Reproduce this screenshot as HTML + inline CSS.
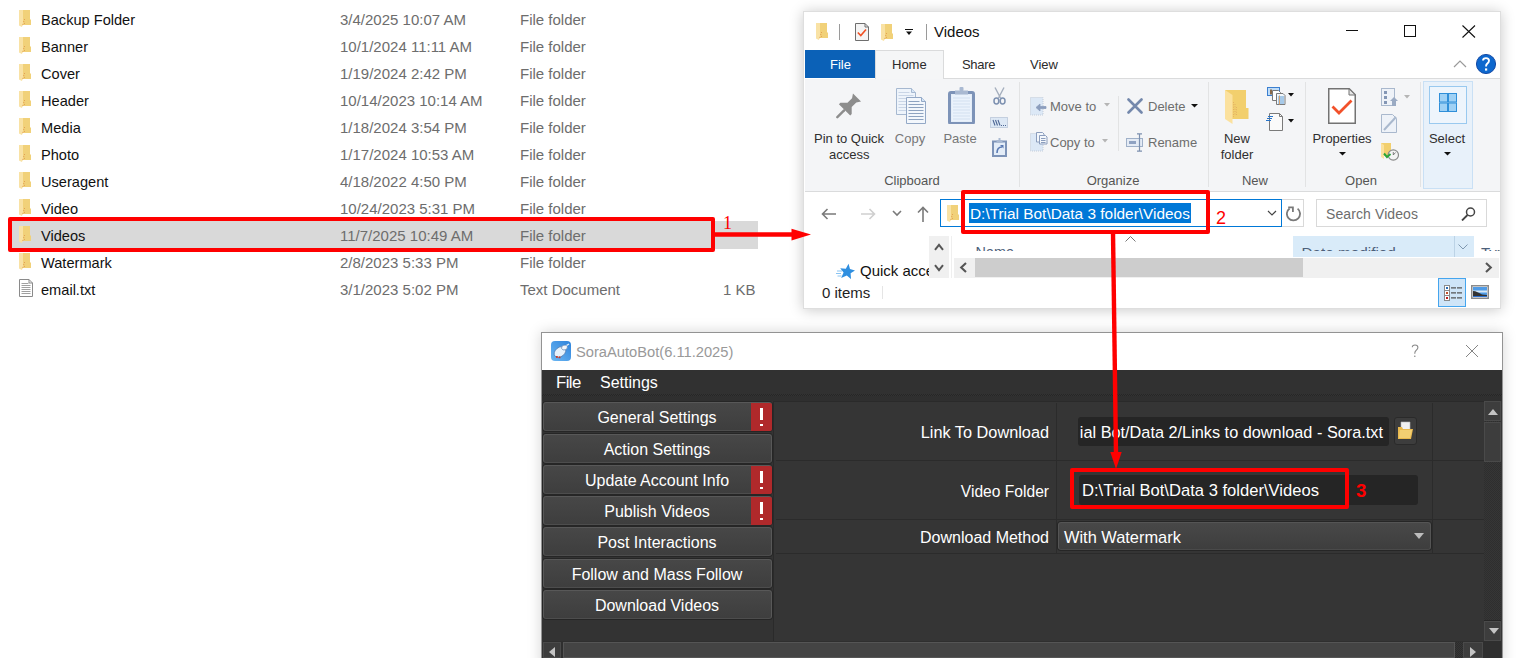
<!DOCTYPE html>
<html><head><meta charset="utf-8">
<style>
*{margin:0;padding:0;box-sizing:border-box}
html,body{width:1516px;height:658px;overflow:hidden;background:#fff;font-family:"Liberation Sans",sans-serif;position:relative}
.a{position:absolute;white-space:pre}
.b{position:absolute}
</style></head><body>
<div class="b" style="left:9px;top:221px;width:749px;height:28px;background:#d9d9d9"></div>
<svg class="b" style="left:19px;top:10px" width="12" height="17" viewBox="0 0 12 17"><path d="M3.5 0h7.5v9.5h1V15H3.5z" fill="#f1d179"/><path d="M0 0h4v15l-1.2 2L0 15.6z" fill="#f9e2a5"/><circle cx="5.5" cy="9.5" r=".5" fill="#e0904a"/><circle cx="4.8" cy="11.5" r=".5" fill="#e0904a"/><circle cx="5.5" cy="13.3" r=".5" fill="#e0904a"/><circle cx="3.8" cy="14.3" r=".5" fill="#e0904a"/></svg>
<div class="a" style="left:41px;top:12.64px;font-size:14.6px;line-height:14.6px;color:#111;">Backup Folder</div>
<div class="a" style="left:340px;top:12.30px;font-size:15px;line-height:15px;color:#6d6d6d;">3/4/2025 10:07 AM</div>
<div class="a" style="left:520px;top:12.30px;font-size:15px;line-height:15px;color:#6d6d6d;">File folder</div>
<svg class="b" style="left:19px;top:37px" width="12" height="17" viewBox="0 0 12 17"><path d="M3.5 0h7.5v9.5h1V15H3.5z" fill="#f1d179"/><path d="M0 0h4v15l-1.2 2L0 15.6z" fill="#f9e2a5"/><circle cx="5.5" cy="9.5" r=".5" fill="#e0904a"/><circle cx="4.8" cy="11.5" r=".5" fill="#e0904a"/><circle cx="5.5" cy="13.3" r=".5" fill="#e0904a"/><circle cx="3.8" cy="14.3" r=".5" fill="#e0904a"/></svg>
<div class="a" style="left:41px;top:39.64px;font-size:14.6px;line-height:14.6px;color:#111;">Banner</div>
<div class="a" style="left:340px;top:39.30px;font-size:15px;line-height:15px;color:#6d6d6d;">10/1/2024 11:11 AM</div>
<div class="a" style="left:520px;top:39.30px;font-size:15px;line-height:15px;color:#6d6d6d;">File folder</div>
<svg class="b" style="left:19px;top:64px" width="12" height="17" viewBox="0 0 12 17"><path d="M3.5 0h7.5v9.5h1V15H3.5z" fill="#f1d179"/><path d="M0 0h4v15l-1.2 2L0 15.6z" fill="#f9e2a5"/><circle cx="5.5" cy="9.5" r=".5" fill="#e0904a"/><circle cx="4.8" cy="11.5" r=".5" fill="#e0904a"/><circle cx="5.5" cy="13.3" r=".5" fill="#e0904a"/><circle cx="3.8" cy="14.3" r=".5" fill="#e0904a"/></svg>
<div class="a" style="left:41px;top:66.64px;font-size:14.6px;line-height:14.6px;color:#111;">Cover</div>
<div class="a" style="left:340px;top:66.30px;font-size:15px;line-height:15px;color:#6d6d6d;">1/19/2024 2:42 PM</div>
<div class="a" style="left:520px;top:66.30px;font-size:15px;line-height:15px;color:#6d6d6d;">File folder</div>
<svg class="b" style="left:19px;top:91px" width="12" height="17" viewBox="0 0 12 17"><path d="M3.5 0h7.5v9.5h1V15H3.5z" fill="#f1d179"/><path d="M0 0h4v15l-1.2 2L0 15.6z" fill="#f9e2a5"/><circle cx="5.5" cy="9.5" r=".5" fill="#e0904a"/><circle cx="4.8" cy="11.5" r=".5" fill="#e0904a"/><circle cx="5.5" cy="13.3" r=".5" fill="#e0904a"/><circle cx="3.8" cy="14.3" r=".5" fill="#e0904a"/></svg>
<div class="a" style="left:41px;top:93.64px;font-size:14.6px;line-height:14.6px;color:#111;">Header</div>
<div class="a" style="left:340px;top:93.30px;font-size:15px;line-height:15px;color:#6d6d6d;">10/14/2023 10:14 AM</div>
<div class="a" style="left:520px;top:93.30px;font-size:15px;line-height:15px;color:#6d6d6d;">File folder</div>
<svg class="b" style="left:19px;top:118px" width="12" height="17" viewBox="0 0 12 17"><path d="M3.5 0h7.5v9.5h1V15H3.5z" fill="#f1d179"/><path d="M0 0h4v15l-1.2 2L0 15.6z" fill="#f9e2a5"/><circle cx="5.5" cy="9.5" r=".5" fill="#e0904a"/><circle cx="4.8" cy="11.5" r=".5" fill="#e0904a"/><circle cx="5.5" cy="13.3" r=".5" fill="#e0904a"/><circle cx="3.8" cy="14.3" r=".5" fill="#e0904a"/></svg>
<div class="a" style="left:41px;top:120.64px;font-size:14.6px;line-height:14.6px;color:#111;">Media</div>
<div class="a" style="left:340px;top:120.30px;font-size:15px;line-height:15px;color:#6d6d6d;">1/18/2024 3:54 PM</div>
<div class="a" style="left:520px;top:120.30px;font-size:15px;line-height:15px;color:#6d6d6d;">File folder</div>
<svg class="b" style="left:19px;top:145px" width="12" height="17" viewBox="0 0 12 17"><path d="M3.5 0h7.5v9.5h1V15H3.5z" fill="#f1d179"/><path d="M0 0h4v15l-1.2 2L0 15.6z" fill="#f9e2a5"/><circle cx="5.5" cy="9.5" r=".5" fill="#e0904a"/><circle cx="4.8" cy="11.5" r=".5" fill="#e0904a"/><circle cx="5.5" cy="13.3" r=".5" fill="#e0904a"/><circle cx="3.8" cy="14.3" r=".5" fill="#e0904a"/></svg>
<div class="a" style="left:41px;top:147.64px;font-size:14.6px;line-height:14.6px;color:#111;">Photo</div>
<div class="a" style="left:340px;top:147.30px;font-size:15px;line-height:15px;color:#6d6d6d;">1/17/2024 10:53 AM</div>
<div class="a" style="left:520px;top:147.30px;font-size:15px;line-height:15px;color:#6d6d6d;">File folder</div>
<svg class="b" style="left:19px;top:172px" width="12" height="17" viewBox="0 0 12 17"><path d="M3.5 0h7.5v9.5h1V15H3.5z" fill="#f1d179"/><path d="M0 0h4v15l-1.2 2L0 15.6z" fill="#f9e2a5"/><circle cx="5.5" cy="9.5" r=".5" fill="#e0904a"/><circle cx="4.8" cy="11.5" r=".5" fill="#e0904a"/><circle cx="5.5" cy="13.3" r=".5" fill="#e0904a"/><circle cx="3.8" cy="14.3" r=".5" fill="#e0904a"/></svg>
<div class="a" style="left:41px;top:174.64px;font-size:14.6px;line-height:14.6px;color:#111;">Useragent</div>
<div class="a" style="left:340px;top:174.30px;font-size:15px;line-height:15px;color:#6d6d6d;">4/18/2022 4:50 PM</div>
<div class="a" style="left:520px;top:174.30px;font-size:15px;line-height:15px;color:#6d6d6d;">File folder</div>
<svg class="b" style="left:19px;top:199px" width="12" height="17" viewBox="0 0 12 17"><path d="M3.5 0h7.5v9.5h1V15H3.5z" fill="#f1d179"/><path d="M0 0h4v15l-1.2 2L0 15.6z" fill="#f9e2a5"/><circle cx="5.5" cy="9.5" r=".5" fill="#e0904a"/><circle cx="4.8" cy="11.5" r=".5" fill="#e0904a"/><circle cx="5.5" cy="13.3" r=".5" fill="#e0904a"/><circle cx="3.8" cy="14.3" r=".5" fill="#e0904a"/></svg>
<div class="a" style="left:41px;top:201.64px;font-size:14.6px;line-height:14.6px;color:#111;">Video</div>
<div class="a" style="left:340px;top:201.30px;font-size:15px;line-height:15px;color:#6d6d6d;">10/24/2023 5:31 PM</div>
<div class="a" style="left:520px;top:201.30px;font-size:15px;line-height:15px;color:#6d6d6d;">File folder</div>
<svg class="b" style="left:19px;top:226px" width="12" height="17" viewBox="0 0 12 17"><path d="M3.5 0h7.5v9.5h1V15H3.5z" fill="#f1d179"/><path d="M0 0h4v15l-1.2 2L0 15.6z" fill="#f9e2a5"/><circle cx="5.5" cy="9.5" r=".5" fill="#e0904a"/><circle cx="4.8" cy="11.5" r=".5" fill="#e0904a"/><circle cx="5.5" cy="13.3" r=".5" fill="#e0904a"/><circle cx="3.8" cy="14.3" r=".5" fill="#e0904a"/></svg>
<div class="a" style="left:41px;top:228.64px;font-size:14.6px;line-height:14.6px;color:#111;">Videos</div>
<div class="a" style="left:340px;top:228.30px;font-size:15px;line-height:15px;color:#6d6d6d;">11/7/2025 10:49 AM</div>
<div class="a" style="left:520px;top:228.30px;font-size:15px;line-height:15px;color:#6d6d6d;">File folder</div>
<svg class="b" style="left:19px;top:253px" width="12" height="17" viewBox="0 0 12 17"><path d="M3.5 0h7.5v9.5h1V15H3.5z" fill="#f1d179"/><path d="M0 0h4v15l-1.2 2L0 15.6z" fill="#f9e2a5"/><circle cx="5.5" cy="9.5" r=".5" fill="#e0904a"/><circle cx="4.8" cy="11.5" r=".5" fill="#e0904a"/><circle cx="5.5" cy="13.3" r=".5" fill="#e0904a"/><circle cx="3.8" cy="14.3" r=".5" fill="#e0904a"/></svg>
<div class="a" style="left:41px;top:255.64px;font-size:14.6px;line-height:14.6px;color:#111;">Watermark</div>
<div class="a" style="left:340px;top:255.30px;font-size:15px;line-height:15px;color:#6d6d6d;">2/8/2023 5:33 PM</div>
<div class="a" style="left:520px;top:255.30px;font-size:15px;line-height:15px;color:#6d6d6d;">File folder</div>
<svg class="b" style="left:19px;top:279px" width="14" height="18" viewBox="0 0 14 18"><path d="M.5 .5h9.5l3.5 3.5v13.5H.5z" fill="#fff" stroke="#8a8a8a"/><path d="M10 .5v3.5h3.5" fill="none" stroke="#8a8a8a"/><path d="M2.5 4.5h7M2.5 6.5h9M2.5 8.5h9M2.5 10.5h9M2.5 12.5h9M2.5 14.5h9" stroke="#a0a0a0"/></svg>
<div class="a" style="left:41px;top:282.64px;font-size:14.6px;line-height:14.6px;color:#111;">email.txt</div>
<div class="a" style="left:340px;top:282.30px;font-size:15px;line-height:15px;color:#6d6d6d;">3/1/2023 5:02 PM</div>
<div class="a" style="left:520px;top:282.30px;font-size:15px;line-height:15px;color:#6d6d6d;">Text Document</div>
<div class="a" style="left:723px;top:282.30px;font-size:15px;line-height:15px;color:#6d6d6d;">1 KB</div>
<div class="b" style="left:803px;top:11px;width:698px;height:298px;background:#fff;border:1px solid #dedede;box-shadow:0 1px 13px rgba(0,0,0,.22)"></div>
<svg class="b" style="left:816px;top:23px" width="12" height="17" viewBox="0 0 12 17"><path d="M3.5 0h7.5v9.5h1V15H3.5z" fill="#f1d179"/><path d="M0 0h4v15l-1.2 2L0 15.6z" fill="#f9e2a5"/><circle cx="5.5" cy="9.5" r=".5" fill="#e0904a"/><circle cx="4.8" cy="11.5" r=".5" fill="#e0904a"/><circle cx="5.5" cy="13.3" r=".5" fill="#e0904a"/><circle cx="3.8" cy="14.3" r=".5" fill="#e0904a"/></svg>
<div class="b" style="left:839px;top:24px;width:1px;height:16px;background:#9a9a9a"></div>
<svg class="b" style="left:855px;top:23px" width="14" height="18" viewBox="0 0 14 18"><path d="M.5 .5h9.5l3.5 3.5v13.5H.5z" fill="#f4f4f4" stroke="#6e6e6e"/><path d="M10 .5v3.5h3.5" fill="none" stroke="#6e6e6e"/><path d="M2.8 9.5l3 3 5.2-6" fill="none" stroke="#f05023" stroke-width="1.6"/></svg>
<svg class="b" style="left:881px;top:24px" width="12" height="17" viewBox="0 0 12 17"><path d="M3.5 0h7.5v9.5h1V15H3.5z" fill="#f1d179"/><path d="M0 0h4v15l-1.2 2L0 15.6z" fill="#f9e2a5"/><circle cx="5.5" cy="9.5" r=".5" fill="#e0904a"/><circle cx="4.8" cy="11.5" r=".5" fill="#e0904a"/><circle cx="5.5" cy="13.3" r=".5" fill="#e0904a"/><circle cx="3.8" cy="14.3" r=".5" fill="#e0904a"/></svg>
<svg class="b" style="left:905px;top:29px" width="9" height="8" viewBox="0 0 9 8"><path d="M0 .5h8" stroke="#111"/><path d="M1 2.5h6l-3 3.5z" fill="#111"/></svg>
<div class="b" style="left:926px;top:24px;width:1px;height:16px;background:#9a9a9a"></div>
<div class="a" style="left:934px;top:24.30px;font-size:15px;line-height:15px;color:#111;">Videos</div>
<div class="b" style="left:1346px;top:30px;width:12px;height:1px;background:#111"></div>
<div class="b" style="left:1404px;top:25px;width:12px;height:12px;border:1px solid #111"></div>
<svg class="b" style="left:1462px;top:25px" width="14" height="13" viewBox="0 0 14 13"><path d="M.5 .5l12.5 12M13 .5L.5 12.5" stroke="#111" stroke-width="1.1"/></svg>
<div class="b" style="left:805px;top:50px;width:70px;height:28px;background:#0b61b7"></div>
<div class="a" style="left:830px;top:58.00px;font-size:13px;line-height:13px;color:#fff;">File</div>
<div class="b" style="left:875px;top:50px;width:69px;height:30px;background:#f5f6f7;border:1px solid #dadbdc;border-bottom:none"></div>
<div class="b" style="left:944px;top:78px;width:556px;height:1px;background:#dadbdc"></div>
<div class="a" style="left:892px;top:58.00px;font-size:13px;line-height:13px;color:#2b2b2b;">Home</div>
<div class="a" style="left:962px;top:58.00px;font-size:13px;line-height:13px;color:#2b2b2b;letter-spacing:-.3px">Share</div>
<div class="a" style="left:1030px;top:58.00px;font-size:13px;line-height:13px;color:#2b2b2b;">View</div>
<svg class="b" style="left:1453px;top:60px" width="14" height="8" viewBox="0 0 14 8"><path d="M1 7l6-6 6 6" fill="none" stroke="#9a9a9a" stroke-width="1.2"/></svg>
<svg class="b" style="left:1476px;top:54px" width="20" height="20" viewBox="0 0 20 20"><circle cx="10" cy="10" r="9.6" fill="#0e68ce" stroke="#0a3f9e" stroke-width=".9"/><path d="M7 6.6C7 5 8.3 4.1 10 4.1s3 1 3 2.6c0 1.5-1 2.2-1.9 3-.8.7-1 1.3-1 2.4v.5" fill="none" stroke="#fff" stroke-width="1.9"/><rect x="9" y="14.4" width="2.2" height="2.2" fill="#fff"/></svg>
<div class="b" style="left:805px;top:79px;width:695px;height:112px;background:#f4f5f7"></div>
<div class="b" style="left:805px;top:191px;width:695px;height:1px;background:#dadbdc"></div>
<div class="b" style="left:1019px;top:82px;width:1px;height:105px;background:#e2e3e4"></div>
<div class="b" style="left:1208px;top:82px;width:1px;height:105px;background:#e2e3e4"></div>
<div class="b" style="left:1305px;top:82px;width:1px;height:105px;background:#e2e3e4"></div>
<div class="b" style="left:1420px;top:82px;width:1px;height:105px;background:#e2e3e4"></div>
<div class="b" style="left:1118px;top:96px;width:1px;height:55px;background:#e2e3e4"></div>
<svg class="b" style="left:836px;top:93px" width="26" height="26" viewBox="0 0 26 26"><g transform="translate(21 4.5) rotate(45)"><path d="M-5.7 0H5.7L3 4V10.5L8 15.5V17.6H-8V15.5L-3 10.5V4Z" fill="#8d8d8d"/><rect x="-1.2" y="17" width="2.4" height="12" rx="1.2" fill="#8d8d8d"/></g></svg>
<div class="a" style="left:814px;top:132.00px;font-size:13px;line-height:13px;color:#2f2f2f;">Pin to Quick</div>
<div class="a" style="left:829px;top:148.00px;font-size:13px;line-height:13px;color:#2f2f2f;">access</div>
<svg class="b" style="left:896px;top:88px" width="31" height="37" viewBox="0 0 31 37"><path d="M.5 .5h15l4 4v22H.5z" fill="#eef4fb" stroke="#a6b8d0"/><path d="M15.5 .5v4h4" fill="#d6e6f7" stroke="#a6b8d0"/><path d="M2.5 4.5h11M2.5 7.5h15M2.5 10.5h15M2.5 13.5h15M2.5 16.5h15M2.5 19.5h15M2.5 22.5h15" stroke="#c9d5e6"/><path d="M10.5 9.5h15l4 4v22h-19z" fill="#f3f7fc" stroke="#93a8c6"/><path d="M25.5 9.5v4h4" fill="#d6e6f7" stroke="#93a8c6"/><path d="M12.5 13.5h11M12.5 16.5h15M12.5 19.5h15M12.5 22.5h15M12.5 25.5h15M12.5 28.5h15M12.5 31.5h15" stroke="#8ea3c0" stroke-width="1.1"/></svg>
<div class="a" style="left:710px;width:400px;text-align:center;top:132.00px;font-size:13px;line-height:13px;color:#777;">Copy</div>
<svg class="b" style="left:948px;top:87px" width="27" height="37" viewBox="0 0 27 37"><rect x="1.5" y="5.5" width="24" height="31" rx="1.5" fill="#e4edf8" stroke="#7d93b8" stroke-width="3"/><rect x="4" y="8" width="19" height="26" fill="#eaf2fc"/><path d="M5 11h17M5 14h17M5 17h17M5 20h17M5 23h17M5 26h17M5 29h17M5 32h17" stroke="#d3e0f0"/><path d="M7 3.5h13v4H7z" fill="#a9b9d2"/><rect x="11.5" y="0" width="4" height="4" rx="1" fill="#a9b9d2"/></svg>
<div class="a" style="left:760px;width:400px;text-align:center;top:132.00px;font-size:13px;line-height:13px;color:#777;">Paste</div>
<svg class="b" style="left:993px;top:87px" width="13" height="18" viewBox="0 0 13 18"><path d="M2 .5l5.5 10.5M11 .5L5.5 11" stroke="#a4aebd" stroke-width="1.4"/><ellipse cx="3.4" cy="14" rx="2.4" ry="3" fill="none" stroke="#7c90b0" stroke-width="1.5"/><ellipse cx="9.6" cy="14" rx="2.4" ry="3" fill="none" stroke="#7c90b0" stroke-width="1.5"/></svg>
<svg class="b" style="left:990px;top:117px" width="18" height="11" viewBox="0 0 18 11"><rect x=".5" y=".5" width="17" height="10" fill="#dde8f5" stroke="#9fb0c9" stroke-dasharray="1 1"/><path d="M3 3l2 5.5M5.5 3l2 5.5M8 3l2 5.5" fill="none" stroke="#4f6896" stroke-width="1.1"/><path d="M11 8.5h1M13 8.5h1M15 8.5h1" stroke="#4f6896"/></svg>
<svg class="b" style="left:992px;top:138px" width="15" height="19" viewBox="0 0 15 19"><rect x="1" y="3.5" width="13" height="14.5" fill="#e4edf8" stroke="#7d93b8" stroke-width="2"/><path d="M4.5 2h6v3h-6z" fill="#a9b9d2"/><rect x="6.5" y="0" width="2" height="2" fill="#a9b9d2"/><path d="M5 15c0-4 2-6 5-6" fill="none" stroke="#5a7ab3" stroke-width="1.6"/><path d="M8 7h3.5v3.5z" fill="#5a7ab3"/></svg>
<div class="a" style="left:712px;width:400px;text-align:center;top:174.00px;font-size:13px;line-height:13px;color:#555;">Clipboard</div>
<svg class="b" style="left:1030px;top:97px" width="17" height="19" viewBox="0 0 17 19"><rect x=".5" y=".5" width="12.5" height="17.5" fill="#dce8f6" stroke="#c2ccd9" stroke-dasharray="1 1"/><path d="M16 9.5h-6V7l-4 3.5 4 3.5v-2.5h6z" fill="#8b9dbd" stroke="#8b9dbd" stroke-width=".8" stroke-linejoin="round"/></svg>
<div class="a" style="left:1050px;top:100.00px;font-size:13px;line-height:13px;color:#6d6d6d;">Move to</div>
<svg class="b" style="left:1104px;top:103px" width="6" height="4" viewBox="0 0 6 4"><path d="M0 0h6L3 3.5z" fill="#b5b5b5"/></svg>
<svg class="b" style="left:1030px;top:132px" width="18" height="20" viewBox="0 0 18 20"><rect x=".5" y="1.5" width="12.5" height="17.5" fill="#dce8f6" stroke="#c2ccd9" stroke-dasharray="1 1"/><path d="M6.5 .5h6l1.5 1.5v8h-7.5z" fill="#f3f7fc" stroke="#8b9dbd"/><path d="M9.5 3.5h6l1.5 1.5v7h-7.5z" fill="#f3f7fc" stroke="#8b9dbd"/><path d="M11 6.5h4.5M11 8.5h4.5M11 10.5h4.5" stroke="#8b9dbd"/></svg>
<div class="a" style="left:1050px;top:136.00px;font-size:13px;line-height:13px;color:#6d6d6d;">Copy to</div>
<svg class="b" style="left:1102px;top:139px" width="6" height="4" viewBox="0 0 6 4"><path d="M0 0h6L3 3.5z" fill="#b5b5b5"/></svg>
<svg class="b" style="left:1127px;top:98px" width="16" height="16" viewBox="0 0 16 16"><path d="M1.5 1.5l13 13M14.5 1.5l-13 13" stroke="#7488ac" stroke-width="2.6" stroke-linecap="round"/></svg>
<div class="a" style="left:1148px;top:100.00px;font-size:13px;line-height:13px;color:#6d6d6d;">Delete</div>
<svg class="b" style="left:1191px;top:104px" width="7" height="4" viewBox="0 0 7 4"><path d="M0 0h7L3.5 3.5z" fill="#111"/></svg>
<svg class="b" style="left:1126px;top:133px" width="18" height="19" viewBox="0 0 18 19"><rect x=".5" y="5.5" width="16" height="8" fill="#e4ebf5" stroke="#9fb0c8"/><rect x="3" y="8" width="7" height="3" fill="#8fa2c2"/><path d="M13.5 1v17M11 .8h5M11 18.2h5" stroke="#7c90b0" stroke-width="1.2"/></svg>
<div class="a" style="left:1148px;top:136.00px;font-size:13px;line-height:13px;color:#6d6d6d;">Rename</div>
<div class="a" style="left:913px;width:400px;text-align:center;top:174.00px;font-size:13px;line-height:13px;color:#555;">Organize</div>
<svg class="b" style="left:1225px;top:90px" width="24" height="35" viewBox="0 0 24 35"><path d="M0 0h21v18h2.5v11H7z" fill="#f2cf6d"/><path d="M0 0l7.5 5v29L0 29z" fill="#fbe19e"/><path d="M8.5 12v15M10 14v12M11.5 17v8" stroke="#d9995a" stroke-width=".7" stroke-dasharray=".8 1.6"/></svg>
<div class="a" style="left:1037px;width:400px;text-align:center;top:132.00px;font-size:13px;line-height:13px;color:#2f2f2f;">New</div>
<div class="a" style="left:1037px;width:400px;text-align:center;top:148.00px;font-size:13px;line-height:13px;color:#2f2f2f;">folder</div>
<svg class="b" style="left:1267px;top:87px" width="19" height="18" viewBox="0 0 19 18"><rect x=".5" y=".5" width="12" height="8" fill="#bfdcf7" stroke="#3b7fd0"/><rect x="3" y="2.5" width="2" height="5" fill="#8a6a4a"/><path d="M5.5 3.5h6l2 2v8h-8z" fill="#fff" stroke="#7a7a7a"/><path d="M9.5 6.5h6.5l2 2v9h-8.5z" fill="#f2f7fc" stroke="#7a7a7a"/><path d="M11 10h6M11 12h6M11 14h6M11 16h6" stroke="#5b9bd5"/><path d="M12.5 8.5v9" stroke="#d8a16a"/></svg>
<svg class="b" style="left:1288px;top:93px" width="6" height="4" viewBox="0 0 6 4"><path d="M0 0h6L3 3.5z" fill="#111"/></svg>
<svg class="b" style="left:1266px;top:113px" width="18" height="18" viewBox="0 0 18 18"><path d="M3.5 .5h10l3 3v14h-13z" fill="#fafafa" stroke="#7a7a7a"/><path d="M13.5 .5v3h3" fill="none" stroke="#7a7a7a"/><path d="M2 3.5h5M1 5.5h5M0 7.5h5" stroke="#2673c8" stroke-width="1.1"/></svg>
<svg class="b" style="left:1288px;top:119px" width="6" height="4" viewBox="0 0 6 4"><path d="M0 0h6L3 3.5z" fill="#111"/></svg>
<div class="a" style="left:1055px;width:400px;text-align:center;top:174.00px;font-size:13px;line-height:13px;color:#555;">New</div>
<svg class="b" style="left:1328px;top:88px" width="28" height="36" viewBox="0 0 28 36"><path d="M.75 .75h20.5l6 6v28.5H.75z" fill="#fff" stroke="#737373" stroke-width="1.5"/><path d="M21 .75v6.25h6.25z" fill="#e6e6e6" stroke="#737373" stroke-width="1"/><path d="M4.5 18.5l6.5 6.5 12.5-12.5" fill="none" stroke="#f2512a" stroke-width="2.8"/></svg>
<div class="a" style="left:1142px;width:400px;text-align:center;top:132.00px;font-size:13px;line-height:13px;color:#2f2f2f;">Properties</div>
<svg class="b" style="left:1339px;top:152px" width="7" height="4" viewBox="0 0 7 4"><path d="M0 0h7L3.5 3.5z" fill="#111"/></svg>
<svg class="b" style="left:1381px;top:88px" width="17" height="19" viewBox="0 0 17 19"><rect x=".5" y=".5" width="13" height="17" fill="#eef2f8" stroke="#a9b8cd"/><rect x="3" y="3" width="3" height="3" fill="#8396b5"/><rect x="3" y="8" width="3" height="3" fill="#8396b5"/><rect x="3" y="13" width="3" height="3" fill="#8396b5"/><path d="M11 18v-5l-2 0 4-4 4 4h-2v5z" fill="#9aaac3"/></svg>
<svg class="b" style="left:1404px;top:95px" width="6" height="4" viewBox="0 0 6 4"><path d="M0 0h6L3 3.5z" fill="#b5b5b5"/></svg>
<svg class="b" style="left:1381px;top:114px" width="17" height="19" viewBox="0 0 17 19"><path d="M.5 .5h11l4 4v14H.5z" fill="#eef2f8" stroke="#a9b8cd"/><path d="M3 16L15 3" stroke="#a9b8cd" stroke-width="2"/></svg>
<svg class="b" style="left:1381px;top:143px" width="18" height="18" viewBox="0 0 18 18"><path d="M0 0h10v13H0z" fill="#f2cf6d"/><path d="M0 0l3 2v14l-3-2z" fill="#fbe19e"/><circle cx="12.3" cy="12" r="5.2" fill="#f4f4f4" stroke="#8a8a8a" stroke-width="1.2"/><path d="M12.3 12l2.2-2.5M12.3 12v-3" stroke="#666" stroke-width=".8"/><path d="M3 10.5l3 3.5 3.5-3" fill="none" stroke="#2aa53a" stroke-width="2"/></svg>
<div class="a" style="left:1161px;width:400px;text-align:center;top:174.00px;font-size:13px;line-height:13px;color:#555;">Open</div>
<div class="b" style="left:1423px;top:81px;width:50px;height:108px;background:#e8f1fa;border:1px solid #c9e0f5"></div>
<div class="b" style="left:1429px;top:86px;width:38px;height:38px;background:#eef5fc;border:1px solid #99c9ef"></div>
<svg class="b" style="left:1439px;top:93px" width="19" height="20" viewBox="0 0 19 20"><rect x=".5" y=".5" width="8" height="8.5" fill="#9fd1f5" stroke="#2f8fd9"/><rect x="9.5" y=".5" width="8" height="8.5" fill="#9fd1f5" stroke="#2f8fd9"/><rect x=".5" y="10" width="8" height="8.5" fill="#9fd1f5" stroke="#2f8fd9"/><rect x="9.5" y="10" width="8" height="8.5" fill="#9fd1f5" stroke="#2f8fd9"/></svg>
<div class="a" style="left:1247px;width:400px;text-align:center;top:132.00px;font-size:13px;line-height:13px;color:#2f2f2f;">Select</div>
<svg class="b" style="left:1444px;top:152px" width="7" height="4" viewBox="0 0 7 4"><path d="M0 0h7L3.5 3.5z" fill="#111"/></svg>
<svg class="b" style="left:821px;top:208px" width="16" height="12" viewBox="0 0 16 12"><path d="M15 6H1.5M6.5 1L1.5 6l5 5" fill="none" stroke="#7a7a7a" stroke-width="1.6"/></svg>
<svg class="b" style="left:860px;top:208px" width="16" height="12" viewBox="0 0 16 12"><path d="M1 6h13.5M9.5 1l5 5-5 5" fill="none" stroke="#cfcfcf" stroke-width="1.6"/></svg>
<svg class="b" style="left:892px;top:210px" width="10" height="7" viewBox="0 0 10 7"><path d="M1 1l4 4 4-4" fill="none" stroke="#7a7a7a" stroke-width="1.6"/></svg>
<svg class="b" style="left:917px;top:206px" width="12" height="16" viewBox="0 0 12 16"><path d="M6 16V1.5M1 6.5l5-5 5 5" fill="none" stroke="#7a7a7a" stroke-width="1.6"/></svg>
<div class="b" style="left:940px;top:199px;width:342px;height:28px;background:#fff;border:1px solid #0078d7"></div>
<svg class="b" style="left:947px;top:205px" width="12" height="17" viewBox="0 0 12 17"><path d="M3.5 0h7.5v9.5h1V15H3.5z" fill="#f1d179"/><path d="M0 0h4v15l-1.2 2L0 15.6z" fill="#f9e2a5"/><circle cx="5.5" cy="9.5" r=".5" fill="#e0904a"/><circle cx="4.8" cy="11.5" r=".5" fill="#e0904a"/><circle cx="5.5" cy="13.3" r=".5" fill="#e0904a"/><circle cx="3.8" cy="14.3" r=".5" fill="#e0904a"/></svg>
<div class="b" style="left:969px;top:203px;width:222px;height:20px;background:#0078d7"></div>
<div class="a" style="left:970px;top:205.96px;font-size:15.4px;line-height:15.4px;color:#fff;">D:\Trial Bot\Data 3 folder\Videos</div>
<svg class="b" style="left:1267px;top:210px" width="10" height="7" viewBox="0 0 10 7"><path d="M1 1l4 4 4-4" fill="none" stroke="#444" stroke-width="1.2"/></svg>
<div class="b" style="left:1282px;top:199px;width:22px;height:28px;background:#fff;border:1px solid #d9d9d9;border-left:none"></div>
<svg class="b" style="left:1286px;top:206px" width="16" height="16" viewBox="0 0 16 16"><path d="M11.6 2.6A6.6 6.6 0 1 1 3.6 2.4" fill="none" stroke="#7a7a7a" stroke-width="1.8"/><path d="M2.2 1.4H6.9V6" fill="none" stroke="#7a7a7a" stroke-width="1.8"/></svg>
<div class="b" style="left:1316px;top:199px;width:171px;height:28px;background:#fff;border:1px solid #d9d9d9"></div>
<div class="a" style="left:1326px;top:207.15px;font-size:14px;line-height:14px;color:#6d6d6d;letter-spacing:.1px">Search Videos</div>
<svg class="b" style="left:1461px;top:207px" width="15" height="14" viewBox="0 0 15 14"><circle cx="9.5" cy="5" r="4" fill="none" stroke="#444" stroke-width="1.5"/><path d="M6.5 8L1 13.5" stroke="#444" stroke-width="1.8"/></svg>
<div class="b" style="left:805px;top:236px;width:695px;height:72px;background:#fff"></div>
<svg class="b" style="left:836px;top:263px" width="19" height="16" viewBox="0 0 19 16"><path d="M11.5 .5l2.2 5.2 5.3.6-4.1 3.5 1.2 5.6-4.7-3-5.2 3.3 1.6-5.8L3.9 6.3l5.6-.4z" fill="#2f8fe0" transform="rotate(8 11 8)"/><path d="M1 8h5M0 10.5h5M1.5 13h4" stroke="#7dbdf0" stroke-width=".9"/></svg>
<div class="b" style="left:860px;top:262px;width:69px;height:20px;overflow:hidden"><div class="a" style="left:0;top:1.3px;font-size:15px;line-height:15px;color:#111">Quick access</div></div>
<div class="b" style="left:929px;top:236px;width:20px;height:42px;background:#f0f0f0"></div>
<svg class="b" style="left:934px;top:243px" width="10" height="8" viewBox="0 0 10 8"><path d="M1 6.8l4-5L9 6.8" fill="none" stroke="#555" stroke-width="2"/></svg>
<svg class="b" style="left:934px;top:264px" width="10" height="8" viewBox="0 0 10 8"><path d="M1 1.2l4 5L9 1.2" fill="none" stroke="#555" stroke-width="2"/></svg>
<div class="b" style="left:951px;top:236px;width:1px;height:42px;background:#efefef"></div>
<div class="b" style="left:954px;top:236px;width:339px;height:15px;overflow:hidden"><div class="a" style="left:21.5px;top:8.6px;font-size:14.4px;line-height:15px;color:#4c607a">Name</div></div>
<div class="b" style="left:1293px;top:236px;width:181px;height:21px;background:#d9ebf9"></div>
<div class="b" style="left:1293px;top:236px;width:161px;height:15px;overflow:hidden"><div class="a" style="left:8.5px;top:8.6px;font-size:15.3px;line-height:15px;color:#4c607a">Date modified</div></div>
<div class="b" style="left:1478px;top:236px;width:22px;height:15px;overflow:hidden"><div class="a" style="left:3px;top:8.6px;font-size:15px;line-height:15px;color:#4c607a">Type</div></div>
<div class="b" style="left:1454px;top:236px;width:1px;height:21px;background:#bcd3e6"></div>
<svg class="b" style="left:1458px;top:244px" width="10" height="6" viewBox="0 0 10 6"><path d="M.5 .5l4.5 4.5L9.5 .5" fill="none" stroke="#7f98b0" stroke-width="1"/></svg>
<svg class="b" style="left:1125px;top:236px" width="11" height="6" viewBox="0 0 11 6"><path d="M.5 5.5l5-5 5 5" fill="none" stroke="#777" stroke-width="1"/></svg>
<div class="b" style="left:954px;top:258px;width:545px;height:20px;background:#f0f0f0"></div>
<svg class="b" style="left:959px;top:262px" width="9" height="11" viewBox="0 0 9 11"><path d="M7 1L2.2 5.5 7 10" fill="none" stroke="#555" stroke-width="2.1"/></svg>
<div class="b" style="left:975px;top:258px;width:328px;height:19px;background:#cdcdcd"></div>
<svg class="b" style="left:1484px;top:262px" width="9" height="11" viewBox="0 0 9 11"><path d="M2 1l4.8 4.5L2 10" fill="none" stroke="#555" stroke-width="2.1"/></svg>
<div class="a" style="left:822px;top:285.30px;font-size:15px;line-height:15px;color:#1e1e1e;">0 items</div>
<div class="b" style="left:882px;top:286px;width:1px;height:13px;background:#e5e5e5"></div>
<div class="b" style="left:1438px;top:278px;width:28px;height:29px;background:#cfe5f8;border:1px solid #45a5ee"></div>
<svg class="b" style="left:1444px;top:285px" width="19" height="16" viewBox="0 0 19 16"><rect x=".5" y=".5" width="5" height="15" fill="#fff" stroke="#8a8a8a"/><path d="M.5 5.5h5M.5 10.5h5" stroke="#8a8a8a"/><rect x="2" y="2" width="2" height="2" fill="#2a6db5"/><rect x="2" y="7" width="2" height="2" fill="#c0502b"/><rect x="2" y="12" width="2" height="2" fill="#c02020"/><path d="M7 2.8h5M13 2.8h5M7 7.8h5M13 7.8h5M7 12.8h5M13 12.8h5" stroke="#555" stroke-width="1.3"/></svg>
<svg class="b" style="left:1471px;top:285px" width="18" height="14" viewBox="0 0 18 14"><rect x=".75" y=".75" width="16.5" height="12.5" fill="#fff" stroke="#8a8a8a" stroke-width="1.5"/><rect x="2" y="2" width="14" height="10" fill="#4f9be6"/><path d="M2 5.5h14v2H2z" fill="#d8e8f6"/><path d="M2 6c3 0 6 2 9 3.5l5 .5v1H2z" fill="#333"/><path d="M2 11h14v1H2z" fill="#2a6fd0"/></svg>
<div class="b" style="left:541px;top:332px;width:962px;height:338px;background:#353535;border:1px solid #939393;box-shadow:0 0 13px rgba(0,0,0,.17)"></div>
<div class="b" style="left:542px;top:333px;width:960px;height:37px;background:#fff"></div>
<svg class="b" style="left:551px;top:341px" width="20" height="20" viewBox="0 0 20 20"><defs><linearGradient id="ig" x1="1" y1="0" x2="0" y2="1"><stop offset="0" stop-color="#2d83dc"/><stop offset="1" stop-color="#6db8f3"/></linearGradient></defs><rect width="20" height="20" rx="4" fill="url(#ig)"/><ellipse cx="9" cy="11" rx="6.5" ry="4.6" fill="#e6f2fc" stroke="#4f78ad" stroke-width=".7" transform="rotate(-38 9 11)"/><ellipse cx="13.5" cy="6.5" rx="3" ry="2.4" fill="#f4f7fa" stroke="#4f78ad" stroke-width=".6" transform="rotate(-20 13.5 6.5)"/><path d="M15.5 4.5l2.5-1.5" stroke="#e6f2fc" stroke-width="1.4"/><rect x="5" y="15" width="1.8" height="1.8" fill="#c83a2a"/><rect x="7.6" y="15.4" width="1.8" height="1.8" fill="#c83a2a"/></svg>
<div class="a" style="left:576px;top:344.56px;font-size:14.7px;line-height:14.7px;color:#999;">SoraAutoBot(6.11.2025)</div>
<svg class="b" style="left:1410px;top:344px" width="10" height="14" viewBox="0 0 10 14"><path d="M2.3 3.2C2.3 1.8 3.6 1 5 1s2.9.9 2.9 2.5c0 1.4-1 2.1-1.9 3-.9.8-1.2 1.4-1.2 2.7v.6" fill="none" stroke="#8a8a8a" stroke-width="1.1"/><circle cx="4.8" cy="12.3" r=".8" fill="#8a8a8a"/></svg>
<svg class="b" style="left:1465px;top:344px" width="14" height="14" viewBox="0 0 14 14"><path d="M1 1l12 12M13 1L1 13" stroke="#858585" stroke-width="1"/></svg>
<div class="b" style="left:542px;top:370px;width:960px;height:25px;background:#313131"></div>
<div class="a" style="left:556px;top:374.68px;font-size:16.8px;line-height:16.8px;color:#fff;letter-spacing:-.6px">File</div>
<div class="a" style="left:600px;top:374.66px;font-size:16px;line-height:16px;color:#fff;">Settings</div>
<div class="b" style="left:542px;top:394px;width:960px;height:2px;background:repeating-conic-gradient(#262626 0 25%,#333 0 50%) 0 0/2px 2px"></div>
<div class="b" style="left:542px;top:396px;width:960px;height:5px;background:#2f2f2f"></div>
<div class="b" style="left:542px;top:401px;width:231px;height:240px;background:#333"></div>
<div class="b" style="left:542px;top:401px;width:231px;height:31px;background:#262626;border-radius:4px"></div>
<div class="b" style="left:543px;top:402px;width:229px;height:29px;background:linear-gradient(#474747,#3e3e3e);border:1px solid #585858;border-bottom-color:#4d4d4d;border-radius:3px"></div>
<div class="b" style="left:751px;top:403px;width:21px;height:28px;background:#b0292b;border-radius:0 2px 2px 0"></div>
<div class="b" style="left:760px;top:408px;width:3px;height:12px;background:#fff"></div>
<div class="b" style="left:760px;top:424px;width:3px;height:2px;background:#fff"></div>
<div class="a" style="left:457px;width:400px;text-align:center;top:410.46px;font-size:16px;line-height:16px;color:#fff;">General Settings</div>
<div class="b" style="left:542px;top:433px;width:231px;height:31px;background:#262626;border-radius:4px"></div>
<div class="b" style="left:543px;top:434px;width:229px;height:29px;background:linear-gradient(#474747,#3e3e3e);border:1px solid #585858;border-bottom-color:#4d4d4d;border-radius:3px"></div>
<div class="a" style="left:457px;width:400px;text-align:center;top:442.46px;font-size:16px;line-height:16px;color:#fff;">Action Settings</div>
<div class="b" style="left:542px;top:464px;width:231px;height:31px;background:#262626;border-radius:4px"></div>
<div class="b" style="left:543px;top:465px;width:229px;height:29px;background:linear-gradient(#474747,#3e3e3e);border:1px solid #585858;border-bottom-color:#4d4d4d;border-radius:3px"></div>
<div class="b" style="left:751px;top:466px;width:21px;height:28px;background:#b0292b;border-radius:0 2px 2px 0"></div>
<div class="b" style="left:760px;top:471px;width:3px;height:12px;background:#fff"></div>
<div class="b" style="left:760px;top:487px;width:3px;height:2px;background:#fff"></div>
<div class="a" style="left:457px;width:400px;text-align:center;top:473.46px;font-size:16px;line-height:16px;color:#fff;">Update Account Info</div>
<div class="b" style="left:542px;top:495px;width:231px;height:31px;background:#262626;border-radius:4px"></div>
<div class="b" style="left:543px;top:496px;width:229px;height:29px;background:linear-gradient(#474747,#3e3e3e);border:1px solid #585858;border-bottom-color:#4d4d4d;border-radius:3px"></div>
<div class="b" style="left:751px;top:497px;width:21px;height:28px;background:#b0292b;border-radius:0 2px 2px 0"></div>
<div class="b" style="left:760px;top:502px;width:3px;height:12px;background:#fff"></div>
<div class="b" style="left:760px;top:518px;width:3px;height:2px;background:#fff"></div>
<div class="a" style="left:457px;width:400px;text-align:center;top:504.46px;font-size:16px;line-height:16px;color:#fff;">Publish Videos</div>
<div class="b" style="left:542px;top:526px;width:231px;height:31px;background:#262626;border-radius:4px"></div>
<div class="b" style="left:543px;top:527px;width:229px;height:29px;background:linear-gradient(#474747,#3e3e3e);border:1px solid #585858;border-bottom-color:#4d4d4d;border-radius:3px"></div>
<div class="a" style="left:457px;width:400px;text-align:center;top:535.46px;font-size:16px;line-height:16px;color:#fff;">Post Interactions</div>
<div class="b" style="left:542px;top:558px;width:231px;height:31px;background:#262626;border-radius:4px"></div>
<div class="b" style="left:543px;top:559px;width:229px;height:29px;background:linear-gradient(#474747,#3e3e3e);border:1px solid #585858;border-bottom-color:#4d4d4d;border-radius:3px"></div>
<div class="a" style="left:457px;width:400px;text-align:center;top:567.46px;font-size:16px;line-height:16px;color:#fff;">Follow and Mass Follow</div>
<div class="b" style="left:542px;top:589px;width:231px;height:31px;background:#262626;border-radius:4px"></div>
<div class="b" style="left:543px;top:590px;width:229px;height:29px;background:linear-gradient(#474747,#3e3e3e);border:1px solid #585858;border-bottom-color:#4d4d4d;border-radius:3px"></div>
<div class="a" style="left:457px;width:400px;text-align:center;top:598.46px;font-size:16px;line-height:16px;color:#fff;">Download Videos</div>
<div class="b" style="left:773px;top:401px;width:1px;height:240px;background:#2a2a2a"></div>
<div class="b" style="left:773px;top:401px;width:711px;height:1px;background:#2a2a2a"></div>
<div class="b" style="left:774px;top:402px;width:710px;height:239px;background:#353535"></div>
<div class="b" style="left:1056px;top:403px;width:1px;height:151px;background:#2b2b2b"></div>
<div class="b" style="left:1432px;top:403px;width:1px;height:151px;background:#2b2b2b"></div>
<div class="b" style="left:776px;top:460px;width:708px;height:1px;background:#2b2b2b"></div>
<div class="b" style="left:776px;top:519px;width:708px;height:1px;background:#2b2b2b"></div>
<div class="b" style="left:776px;top:553px;width:708px;height:1px;background:#2b2b2b"></div>
<div class="a" style="right:467px;top:423.80px;font-size:16.3px;line-height:16.3px;color:#fff;">Link To Download</div>
<div class="b" style="left:1078px;top:417px;width:311px;height:29px;background:#252525;border-radius:3px"></div>
<div class="b" style="left:1080px;top:417px;width:306px;height:29px;overflow:hidden"><div class="a" style="right:3px;top:6.5px;font-size:16.3px;line-height:16px;color:#fff">D:/Trial Bot/Data 2/Links to download - Sora.txt</div></div>
<div class="b" style="left:1394px;top:417px;width:23px;height:28px;background:#3d3d3d;border:1px solid #2a2a2a;border-radius:3px"></div>
<svg class="b" style="left:1398px;top:421px" width="16" height="18" viewBox="0 0 16 18"><path d="M3 1h9v9H3z" fill="#f1f1f1" stroke="#b5b5b5" stroke-width=".6"/><path d="M0 6h4l1 2h10l-2 10H0z" fill="#e9b94e"/><path d="M2 9l12 0-2 8H1z" fill="#f3cf72"/></svg>
<div class="a" style="right:467px;top:483.79px;font-size:15.6px;line-height:15.6px;color:#fff;">Video Folder</div>
<div class="b" style="left:1079px;top:475px;width:339px;height:30px;background:#252525;border-radius:3px"></div>
<div class="a" style="left:1082px;top:482.95px;font-size:16.6px;line-height:16.6px;color:#fff;">D:\Trial Bot\Data 3 folder\Videos</div>
<div class="a" style="right:467px;top:529.86px;font-size:16px;line-height:16px;color:#fff;">Download Method</div>
<div class="b" style="left:1057px;top:521px;width:375px;height:30px;background:#262626;border-radius:4px"></div>
<div class="b" style="left:1058px;top:522px;width:373px;height:28px;background:linear-gradient(#484848,#3e3e3e);border:1px solid #555;border-bottom-color:#4a4a4a;border-radius:3px"></div>
<div class="a" style="left:1064px;top:528.72px;font-size:16.4px;line-height:16.4px;color:#fff;">With Watermark</div>
<svg class="b" style="left:1414px;top:533px" width="10" height="6" viewBox="0 0 10 6"><path d="M0 0h10L5 6z" fill="#bdbdbd"/></svg>
<div class="b" style="left:1484px;top:401px;width:17px;height:240px;background:repeating-conic-gradient(#2e2e2e 0 25%,#363636 0 50%) 0 0/2px 2px"></div>
<div class="b" style="left:1484px;top:401px;width:17px;height:20px;background:#3d3d3d;border:1px solid #4a4a4a"></div>
<svg class="b" style="left:1488px;top:409px" width="10" height="6" viewBox="0 0 10 6"><path d="M5 0l5 6H0z" fill="#c4c4c4"/></svg>
<div class="b" style="left:1484px;top:422px;width:17px;height:40px;background:#3d3d3d;border:1px solid #4a4a4a"></div>
<div class="b" style="left:1484px;top:620px;width:17px;height:1px;background:#262626"></div>
<div class="b" style="left:1484px;top:621px;width:17px;height:20px;background:#3d3d3d;border:1px solid #4a4a4a"></div>
<svg class="b" style="left:1489px;top:628px" width="10" height="6" viewBox="0 0 10 6"><path d="M0 0h10L5 6z" fill="#c4c4c4"/></svg>
<div class="b" style="left:543px;top:641px;width:941px;height:17px;background:#2f2f2f"></div>
<div class="b" style="left:543px;top:642px;width:18px;height:16px;background:#3d3d3d;border:1px solid #4a4a4a"></div>
<svg class="b" style="left:549px;top:647px" width="7" height="10" viewBox="0 0 7 10"><path d="M6 0v10L0 5z" fill="#c4c4c4"/></svg>
<div class="b" style="left:563px;top:642px;width:892px;height:16px;background:#444;border:1px solid #555"></div>
<div class="b" style="left:1455px;top:642px;width:8px;height:16px;background:repeating-conic-gradient(#2c2c2c 0 25%,#363636 0 50%) 0 0/2px 2px"></div>
<div class="b" style="left:1463px;top:642px;width:20px;height:16px;background:#3d3d3d;border:1px solid #4a4a4a"></div>
<svg class="b" style="left:1470px;top:647px" width="7" height="10" viewBox="0 0 7 10"><path d="M0 0v10l6-5z" fill="#c4c4c4"/></svg>
<div class="b" style="left:1484px;top:641px;width:17px;height:17px;background:#2f2f2f"></div>
<div class="b" style="left:8px;top:217px;width:707px;height:35px;border:4px solid #ff0000;border-radius:2px"></div>
<div class="a" style="left:723px;top:213.76px;font-size:18px;line-height:18px;color:#ff0000;font-family:'Liberation Serif',serif">1</div>
<svg class="b" style="left:0;top:0" width="1516" height="658"><path d="M714 234.5H793" stroke="#ff0000" stroke-width="4.6"/><path d="M791.5 228.7L811 234.5 791.5 240.4z" fill="#ff0000"/><path d="M1113 232L1116 455" stroke="#ff0000" stroke-width="4.4"/><path d="M1110.3 452L1121.7 452 1116 469z" fill="#ff0000"/></svg>
<div class="b" style="left:961px;top:190px;width:249px;height:44px;border:4px solid #ff0000;border-radius:2px"></div>
<div class="a" style="left:1216px;top:208.76px;font-size:18px;line-height:18px;color:#ff0000;">2</div>
<div class="b" style="left:1070px;top:468px;width:279px;height:41px;border:4px solid #ff0000;border-radius:2px"></div>
<div class="a" style="left:1356px;top:482.34px;font-size:18.5px;line-height:18.5px;color:#ff0000;font-weight:bold">3</div>
</body></html>
